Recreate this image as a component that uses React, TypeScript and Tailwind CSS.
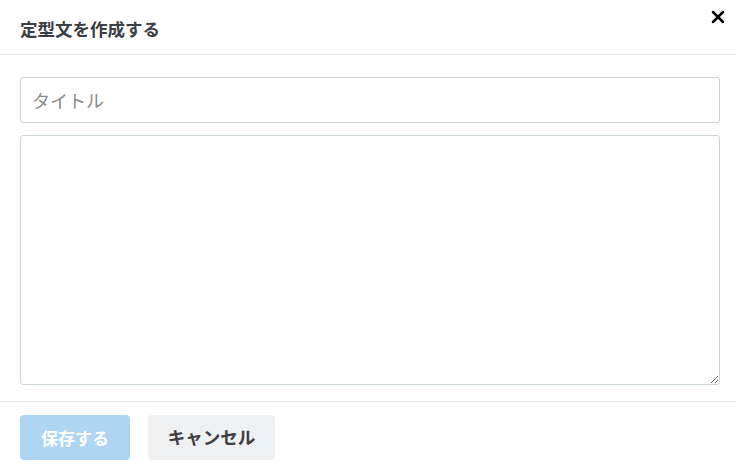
import { X } from 'lucide-react';

export default function App() {
  return (
    <div className="w-[736px] h-[476px] bg-white font-['Noto_Sans_CJK_JP','Noto_Sans',sans-serif] text-[#3b3e43] overflow-hidden">
      <div className="relative h-[55px] border-b border-[#e6e9ec] flex items-center px-5">
        <h2 className="text-[17.5px] font-bold leading-none pt-[3px]">定型文を作成する</h2>
        <button className="absolute right-[8px] top-[7px] text-black">
          <X className="w-[20px] h-[20px]" strokeWidth={3} />
        </button>
      </div>
      <div className="pl-5 pr-4 pt-[22px] pb-4 flex flex-col gap-3 border-b border-[#e6e9ec]">
        <input
          placeholder="タイトル"
          className="h-[46px] w-full rounded-[3px] border border-[#c8d4d8] px-[11px] text-[18px] placeholder:text-[#8a8a8a] outline-none"
        />
        <textarea className="h-[250px] w-full rounded-[3px] border border-[#c8d4d8] px-[11px] py-2 text-[16px] outline-none" />
      </div>
      <div className="px-5 pt-[13px] flex gap-[18px]">
        <button className="w-[110px] h-[45px] rounded-[4px] bg-[#aed6f3] text-white text-[17px] font-bold">保存する</button>
        <button className="w-[127px] h-[45px] rounded-[4px] bg-[#eff0f2] text-[#3b3e43] text-[17.5px] font-bold">キャンセル</button>
      </div>
    </div>
  );
}
